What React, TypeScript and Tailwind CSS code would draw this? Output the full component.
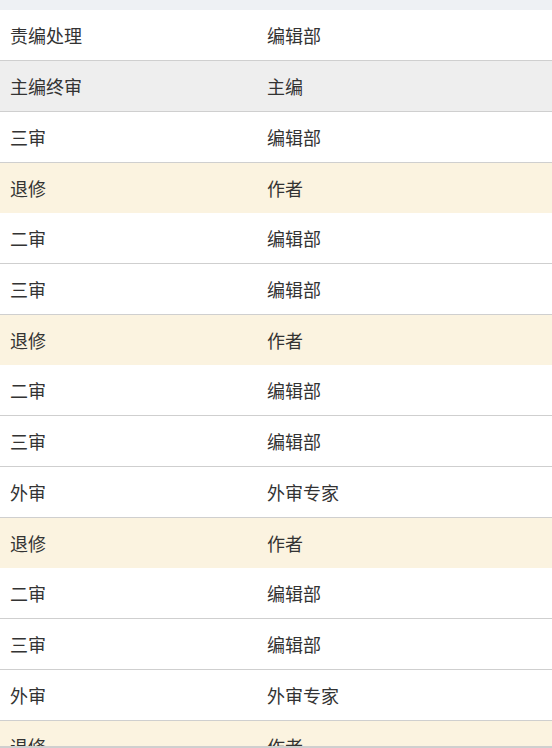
const rows: { step: string; who: string; kind?: 'gray' | 'back' }[] = [
  { step: '责编处理', who: '编辑部' },
  { step: '主编终审', who: '主编', kind: 'gray' },
  { step: '三审', who: '编辑部' },
  { step: '退修', who: '作者', kind: 'back' },
  { step: '二审', who: '编辑部' },
  { step: '三审', who: '编辑部' },
  { step: '退修', who: '作者', kind: 'back' },
  { step: '二审', who: '编辑部' },
  { step: '三审', who: '编辑部' },
  { step: '外审', who: '外审专家' },
  { step: '退修', who: '作者', kind: 'back' },
  { step: '二审', who: '编辑部' },
  { step: '三审', who: '编辑部' },
  { step: '外审', who: '外审专家' },
  { step: '退修', who: '作者', kind: 'back' },
];

const App = () => {
  return (
    <div
      className="h-[748px] w-[552px] flex flex-col overflow-hidden bg-white text-[#333] text-[18px]"
      style={{ fontFamily: '"Noto Sans CJK SC", "Noto Sans", sans-serif' }}
    >
      <div className="h-[10px] shrink-0 bg-[#eef1f4]" />
      <div className="flex-1 overflow-hidden">
        {rows.map((r, i) => (
          <div
            key={i}
            className={
              r.kind === 'back'
                ? 'flex items-center h-[50px] bg-[#fbf3e0]'
                : r.kind === 'gray'
                ? 'flex items-center h-[51px] bg-[#eeeeee] border-b border-[#cfcfcf]'
                : 'flex items-center h-[51px] bg-white border-b border-[#cfcfcf]'
            }
          >
            <div className="w-[257px] pl-[10px]">{r.step}</div>
            <div className="flex-1 pl-[10px]">{r.who}</div>
          </div>
        ))}
      </div>
      <div className="h-[2px] shrink-0 bg-[#cfcfcf]" />
    </div>
  );
};

export default App;
